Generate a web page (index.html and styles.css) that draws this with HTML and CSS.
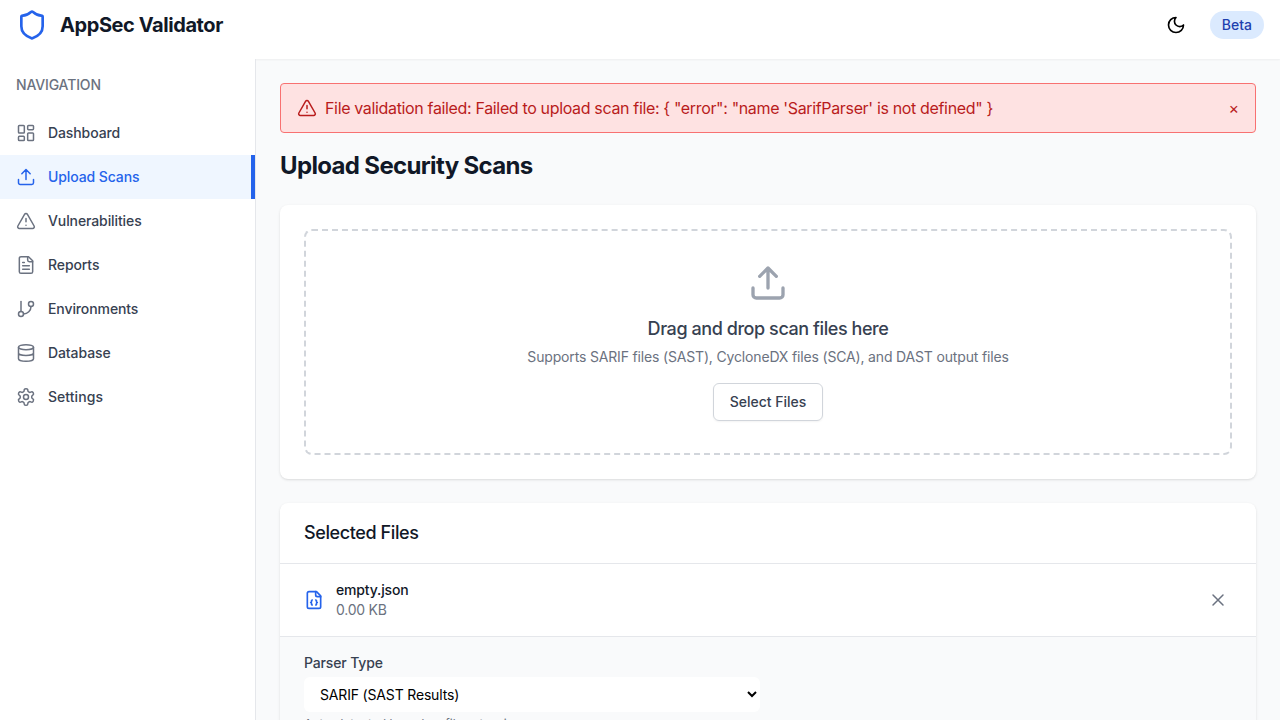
FILE: index.html
```html
<!DOCTYPE html>
<html lang="en">
<head>
<meta charset="utf-8">
<title>AppSec Validator</title>
<link rel="stylesheet" href="styles.css">
</head>
<body>
<header class="header">
  <div class="brand">
    <svg class="icon logo" viewBox="0 0 24 24"><path d="M20 13c0 5-3.5 7.5-7.66 8.95a1 1 0 0 1-.67-.01C7.5 20.5 4 18 4 13V6a1 1 0 0 1 1-1c2 0 4.5-1.2 6.24-2.72a1.17 1.17 0 0 1 1.52 0C14.51 3.81 17 5 19 5a1 1 0 0 1 1 1z"/></svg>
    <span class="brand-name">AppSec Validator</span>
  </div>
  <div class="header-actions">
    <button class="theme-toggle" aria-label="Toggle theme"><svg class="icon" viewBox="0 0 24 24"><path d="M12 3a6 6 0 0 0 9 9 9 9 0 1 1-9-9Z"/></svg></button>
    <span class="badge">Beta</span>
  </div>
</header>
<div class="layout">
  <aside class="sidebar">
    <h2 class="nav-title">NAVIGATION</h2>
    <nav class="nav">
      <a class="nav-item"><svg class="icon" viewBox="0 0 24 24"><rect width="7" height="9" x="3" y="3" rx="1"/><rect width="7" height="5" x="14" y="3" rx="1"/><rect width="7" height="9" x="14" y="12" rx="1"/><rect width="7" height="5" x="3" y="16" rx="1"/></svg>Dashboard</a>
      <a class="nav-item active"><svg class="icon" viewBox="0 0 24 24"><path d="M21 15v4a2 2 0 0 1-2 2H5a2 2 0 0 1-2-2v-4M17 8l-5-5-5 5M12 3v12"/></svg>Upload Scans</a>
      <a class="nav-item"><svg class="icon" viewBox="0 0 24 24"><path d="m21.73 18-8-14a2 2 0 0 0-3.48 0l-8 14A2 2 0 0 0 4 21h16a2 2 0 0 0 1.73-3M12 9v4M12 17h.01"/></svg>Vulnerabilities</a>
      <a class="nav-item"><svg class="icon" viewBox="0 0 24 24"><path d="M15 2H6a2 2 0 0 0-2 2v16a2 2 0 0 0 2 2h12a2 2 0 0 0 2-2V7Z"/><path d="M14 2v4a2 2 0 0 0 2 2h4M10 9H8M16 13H8M16 17H8"/></svg>Reports</a>
      <a class="nav-item"><svg class="icon" viewBox="0 0 24 24"><path d="M6 3v12"/><circle cx="18" cy="6" r="3"/><circle cx="6" cy="18" r="3"/><path d="M18 9a9 9 0 0 1-9 9"/></svg>Environments</a>
      <a class="nav-item"><svg class="icon" viewBox="0 0 24 24"><ellipse cx="12" cy="5" rx="9" ry="3"/><path d="M3 5v14a9 3 0 0 0 18 0V5M3 12a9 3 0 0 0 18 0"/></svg>Database</a>
      <a class="nav-item nav-settings"><svg class="icon" viewBox="0 0 24 24"><path d="M12.22 2h-.44a2 2 0 0 0-2 2v.18a2 2 0 0 1-1 1.73l-.43.25a2 2 0 0 1-2 0l-.15-.08a2 2 0 0 0-2.73.73l-.22.38a2 2 0 0 0 .73 2.73l.15.1a2 2 0 0 1 1 1.72v.51a2 2 0 0 1-1 1.74l-.15.09a2 2 0 0 0-.73 2.73l.22.38a2 2 0 0 0 2.73.73l.15-.08a2 2 0 0 1 2 0l.43.25a2 2 0 0 1 1 1.73V20a2 2 0 0 0 2 2h.44a2 2 0 0 0 2-2v-.18a2 2 0 0 1 1-1.73l.43-.25a2 2 0 0 1 2 0l.15.08a2 2 0 0 0 2.73-.73l.22-.39a2 2 0 0 0-.73-2.73l-.15-.08a2 2 0 0 1-1-1.74v-.5a2 2 0 0 1 1-1.74l.15-.09a2 2 0 0 0 .73-2.73l-.22-.38a2 2 0 0 0-2.73-.73l-.15.08a2 2 0 0 1-2 0l-.43-.25a2 2 0 0 1-1-1.73V4a2 2 0 0 0-2-2z"/><circle cx="12" cy="12" r="3"/></svg>Settings</a>
    </nav>
  </aside>
  <main class="main">
    <div class="alert">
      <svg class="icon" viewBox="0 0 24 24"><path d="m21.73 18-8-14a2 2 0 0 0-3.48 0l-8 14A2 2 0 0 0 4 21h16a2 2 0 0 0 1.73-3M12 9v4M12 17h.01"/></svg>
      <span class="alert-text">File validation failed: Failed to upload scan file: { "error": "name 'SarifParser' is not defined" }</span>
      <button class="alert-close">×</button>
    </div>
    <h1 class="page-title">Upload Security Scans</h1>
    <section class="card upload-card">
      <div class="dropzone">
        <svg class="icon drop-icon" viewBox="0 0 24 24"><path d="M21 15v4a2 2 0 0 1-2 2H5a2 2 0 0 1-2-2v-4M17 8l-5-5-5 5M12 3v12"/></svg>
        <h3 class="drop-title">Drag and drop scan files here</h3>
        <p class="drop-text">Supports SARIF files (SAST), CycloneDX files (SCA), and DAST output files</p>
        <button class="select-button">Select Files</button>
      </div>
    </section>
    <section class="card files-card">
      <h3 class="files-title">Selected Files</h3>
      <div class="file-row">
        <svg class="icon file-icon" viewBox="0 0 24 24"><path d="M15 2H6a2 2 0 0 0-2 2v16a2 2 0 0 0 2 2h12a2 2 0 0 0 2-2V7Z"/><path d="M14 2v4a2 2 0 0 0 2 2h4M10 12a1 1 0 0 0-1 1v1a1 1 0 0 1-1 1 1 1 0 0 1 1 1v1a1 1 0 0 0 1 1M14 18a1 1 0 0 0 1-1v-1a1 1 0 0 1 1-1 1 1 0 0 1-1-1v-1a1 1 0 0 0-1-1"/></svg>
        <div class="file-info">
          <p class="file-name">empty.json</p>
          <p class="file-size">0.00 KB</p>
        </div>
        <button class="remove" aria-label="Remove file"><svg class="icon" viewBox="0 0 24 24"><path d="M18 6 6 18M6 6l12 12"/></svg></button>
      </div>
      <div class="parser">
        <label class="parser-label" for="parser">Parser Type</label>
        <select class="parser-select" id="parser"><option>SARIF (SAST Results)</option></select>
        <p class="parser-help">Auto-detected based on file extension</p>
      </div>
    </section>
  </main>
</div>
</body>
</html>
```
FILE: styles.css
```css
* { box-sizing: border-box; margin: 0; padding: 0; }
body {
  height: 100vh;
  overflow: hidden;
  display: flex;
  flex-direction: column;
  font: 400 14px/20px Inter, sans-serif;
  letter-spacing: -.15px;
  color: #111827;
  background: #f9fafb;
}
button { font: inherit; letter-spacing: inherit; color: inherit; background: none; border: 0; }
.icon {
  width: 20px;
  height: 20px;
  flex: none;
  fill: none;
  stroke: currentColor;
  stroke-width: 2;
  stroke-linecap: round;
  stroke-linejoin: round;
}
.header {
  flex: none;
  height: 59px;
  padding: 9px 16px 18px;
  display: flex;
  align-items: center;
  justify-content: space-between;
  background: #fff;
  box-shadow: 0 1px 2px rgba(0, 0, 0, .05);
}
.brand { display: flex; align-items: center; gap: 12px; }
.logo { width: 32px; height: 32px; color: #2563eb; }
.brand-name { font-size: 20px; line-height: 28px; font-weight: 700; letter-spacing: -.42px; }
.header-actions { display: flex; align-items: center; gap: 16px; }
.theme-toggle { display: flex; padding: 8px; color: #000; }
.badge {
  padding: 4px 12px;
  border-radius: 14px;
  background: #dbeafe;
  color: #1e40af;
  font-weight: 500;
  letter-spacing: 0;
}
.layout { flex: 1; min-height: 0; display: flex; }
.sidebar {
  flex: none;
  width: 256px;
  padding-top: 16px;
  background: #fff;
  border-right: 1px solid #e5e7eb;
}
.nav-title { padding: 0 16px; color: #6b7280; font-size: 14px; font-weight: 500; }
.nav { margin-top: 16px; }
.nav-item {
  height: 44px;
  padding: 0 16px;
  display: flex;
  align-items: center;
  gap: 12px;
  color: #374151;
  font-weight: 500;
  letter-spacing: -.1px;
}
.nav-settings { letter-spacing: .05px; }
.nav-item .icon { color: #6b7280; stroke-width: 1.8; }
.nav-item.active { color: #2563eb; background: #eff6ff; border-right: 4px solid #2563eb; }
.nav-item.active .icon { color: #2563eb; }
.main { flex: 1; min-width: 0; padding: 24px; }
.alert {
  height: 50px;
  padding: 0 16px;
  display: flex;
  align-items: center;
  gap: 8px;
  background: #fee2e2;
  border: 1px solid #f87171;
  border-radius: 4px;
  color: #b91c1c;
  font-size: 16px;
  line-height: 24px;
}
.alert .icon { stroke-width: 1.8; }
.alert-text { flex: 1; letter-spacing: -.345px; }
.page-title {
  margin: 16px 0 24px;
  padding-top: 1px;
  height: 32px;
  font-size: 24px;
  line-height: 32px;
  font-weight: 700;
  letter-spacing: -.65px;
}
.card {
  background: #fff;
  border-radius: 8px;
  box-shadow: 0 1px 3px rgba(0, 0, 0, .1), 0 1px 2px -1px rgba(0, 0, 0, .1);
}
.upload-card { padding: 24px; }
.dropzone {
  padding: 32px;
  display: flex;
  flex-direction: column;
  align-items: center;
  border: 2px dashed #d1d5db;
  border-radius: 8px;
}
.drop-icon { width: 40px; height: 40px; color: #9ca3af; }
.drop-title { margin-top: 12px; color: #374151; font-size: 18px; line-height: 28px; font-weight: 500; letter-spacing: -.43px; }
.drop-text { margin-top: 4px; color: #6b7280; letter-spacing: -.165px; }
.select-button {
  margin-top: 16px;
  padding: 8px 16px;
  border: 1px solid #d1d5db;
  border-radius: 6px;
  box-shadow: 0 1px 2px rgba(0, 0, 0, .05);
  color: #374151;
  font-weight: 500;
  letter-spacing: 0;
}
.files-card { margin-top: 24px; overflow: hidden; }
.files-title {
  padding: 16px 24px;
  border-bottom: 1px solid #e5e7eb;
  font-size: 18px;
  line-height: 28px;
  font-weight: 500;
  letter-spacing: -.4px;
}
.file-row {
  padding: 16px 24px;
  display: flex;
  align-items: center;
  gap: 12px;
  border-bottom: 1px solid #e5e7eb;
}
.file-icon { color: #2563eb; }
.file-info { flex: 1; }
.file-name { font-weight: 500; }
.file-size { color: #6b7280; letter-spacing: -.25px; }
.remove { padding: 4px; display: flex; color: #6b7280; }
.remove .icon { stroke-width: 1.8; }
.parser { padding: 16px 24px; background: #f9fafb; }
.parser-label { display: block; margin-bottom: 4px; color: #374151; font-weight: 500; }
.parser-select {
  display: block;
  width: 456px;
  height: 35px;
  padding: 0 12px;
  border: 0;
  border-radius: 6px;
  background: #fff;
  color: #000;
  font: 400 14px Inter, sans-serif;
  letter-spacing: -.17px;
}
.parser-help { margin-top: 4px; color: #6b7280; font-size: 12px; line-height: 16px; letter-spacing: 0; }
```
